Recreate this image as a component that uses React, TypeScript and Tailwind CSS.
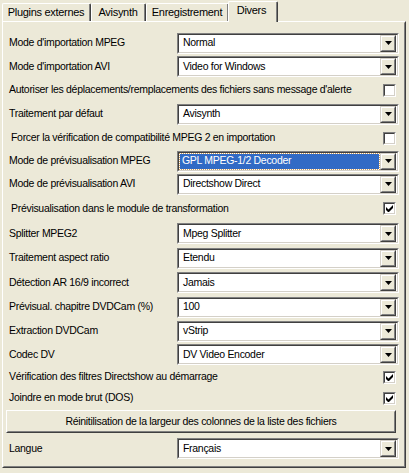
import React from "react";

const face = "bg-[#ece9d8]";

function Arrow() {
  return (
    <svg width="7" height="4" viewBox="0 0 7 4">
      <path d="M0 0h7L3.5 4z" fill="#000" />
    </svg>
  );
}

function Combo({ value, selected }: { value: string; selected?: boolean }) {
  return (
    <div className="w-[222px] h-[21px] border border-t-[#808080] border-l-[#808080] border-b-white border-r-white">
      <div className="h-full border border-t-[#404040] border-l-[#404040] border-b-[#d4d0c8] border-r-[#d4d0c8] bg-white flex items-center">
        <div className="flex-1 h-full flex items-center pl-[1px] pr-[1px]">
          {selected ? (
            <div className="h-[15px] w-full bg-[#316ac5] text-white flex items-center px-[2px] outline outline-1 outline-dotted outline-[#ce9d5a]">
              {value}
            </div>
          ) : (
            <span className="px-[3px]">{value}</span>
          )}
        </div>
        <div className="w-[16px] h-[17px] mr-[1px] border border-t-[#d4d0c8] border-l-[#d4d0c8] border-b-[#404040] border-r-[#404040]">
          <div className={`h-full border border-t-white border-l-white border-b-[#808080] border-r-[#808080] ${face} flex items-center justify-center`}>
            <Arrow />
          </div>
        </div>
      </div>
    </div>
  );
}

function Check({ checked }: { checked?: boolean }) {
  return (
    <div className="w-[13px] h-[13px] border border-t-[#808080] border-l-[#808080] border-b-white border-r-white">
      <div className="h-full border border-t-[#404040] border-l-[#404040] border-b-[#d4d0c8] border-r-[#d4d0c8] bg-white flex items-center justify-center">
        {checked && (
          <svg width="7" height="7" viewBox="0 0 7 7">
            <path d="M0 2v3l2 2h1l4-4V0L2.5 4.5z" fill="#000" />
          </svg>
        )}
      </div>
    </div>
  );
}

type Row =
  | { kind: "combo"; label: string; value: string; h: number; selected?: boolean }
  | { kind: "check"; label: string; checked?: boolean; h: number; indent?: boolean }
  | { kind: "button"; label: string; h: number };

const rows: Row[] = [
  { kind: "combo", label: "Mode d'importation MPEG", value: "Normal", h: 24 },
  { kind: "combo", label: "Mode d'importation AVI", value: "Video for Windows", h: 23 },
  { kind: "check", label: "Autoriser les déplacements/remplacements des fichiers sans message d'alerte", h: 24 },
  { kind: "combo", label: "Traitement par défaut", value: "Avisynth", h: 24 },
  { kind: "check", label: "Forcer la vérification de compatibilité MPEG 2 en importation", h: 24, indent: true },
  { kind: "combo", label: "Mode de prévisualisation MPEG", value: "GPL MPEG-1/2 Decoder", h: 22, selected: true },
  { kind: "combo", label: "Mode de prévisualisation AVI", value: "Directshow Direct", h: 24 },
  { kind: "check", label: "Prévisualisation dans le module de transformation", checked: true, h: 25, indent: true },
  { kind: "combo", label: "Splitter MPEG2", value: "Mpeg Splitter", h: 25 },
  { kind: "combo", label: "Traitement aspect ratio", value: "Etendu", h: 24 },
  { kind: "combo", label: "Détection AR 16/9 incorrect", value: "Jamais", h: 25 },
  { kind: "combo", label: "Prévisual. chapitre DVDCam (%)", value: "100", h: 24 },
  { kind: "combo", label: "Extraction DVDCam", value: "vStrip", h: 24 },
  { kind: "combo", label: "Codec DV", value: "DV Video Encoder", h: 23 },
  { kind: "check", label: "Vérification des filtres Directshow au démarrage", checked: true, h: 22 },
  { kind: "check", label: "Joindre en mode brut (DOS)", checked: true, h: 20 },
  { kind: "button", label: "Réinitilisation de la largeur des colonnes de la liste des fichiers", h: 27 },
  { kind: "combo", label: "Langue", value: "Français", h: 27 },
];

const tabs = [
  { label: "Plugins externes", w: 89 },
  { label: "Avisynth", w: 55 },
  { label: "Enregistrement", w: 83 },
];

export default function App() {
  return (
    <div className={`w-[409px] h-[473px] ${face} text-[10.5px] tracking-[-0.3px] text-black font-['Liberation_Sans',Arial,sans-serif] pl-[2px] pt-[1px] overflow-hidden`}>
      <div className="flex items-end h-[20px] relative z-10">
        {tabs.map((t) => (
          <div
            key={t.label}
            style={{ width: t.w }}
            className="h-[18px] whitespace-nowrap text-[11px] border-t border-l border-white border-r border-r-[#404040] rounded-t-[2px] flex items-center justify-center"
          >
            <div className="w-full h-full flex items-center justify-center border-r border-[#808080] pb-[1px]">{t.label}</div>
          </div>
        ))}
        <div className={`w-[50px] h-[21px] -ml-[1px] -mb-[1px] text-[11px] ${face} border-t border-l border-white border-r border-r-[#404040] rounded-t-[2px]`}>
          <div className="w-full h-full flex items-center justify-center border-r border-[#808080] pb-[3px] pr-[2px]">Divers</div>
        </div>
      </div>
      <div className="w-[404px] h-[447px] border border-t-white border-l-white border-b-[#404040] border-r-[#404040]">
        <div className="h-full border border-t-[#ece9d8] border-l-[#ece9d8] border-b-[#808080] border-r-[#808080] pt-[8px] pl-[5px] pr-[5px] flex flex-col">
          {rows.map((r) => (
            <div key={r.label} style={{ height: r.h }} className="flex items-center justify-between shrink-0">
              {r.kind === "combo" && (
                <>
                  <span className="whitespace-nowrap">{r.label}</span>
                  <Combo value={r.value} selected={r.selected} />
                </>
              )}
              {r.kind === "check" && (
                <>
                  <span className={`whitespace-nowrap ${r.indent ? "pl-[2px]" : ""}`}>{r.label}</span>
                  <div className="pr-[3px]">
                    <Check checked={r.checked} />
                  </div>
                </>
              )}
              {r.kind === "button" && (
                <div className="w-full -ml-[3px] mr-[-1px] h-[23px] border border-t-white border-l-white border-b-[#404040] border-r-[#404040]">
                  <div className="h-full border border-t-[#ece9d8] border-l-[#ece9d8] border-b-[#808080] border-r-[#808080] flex items-center justify-center">
                    {r.label}
                  </div>
                </div>
              )}
            </div>
          ))}
        </div>
      </div>
    </div>
  );
}
